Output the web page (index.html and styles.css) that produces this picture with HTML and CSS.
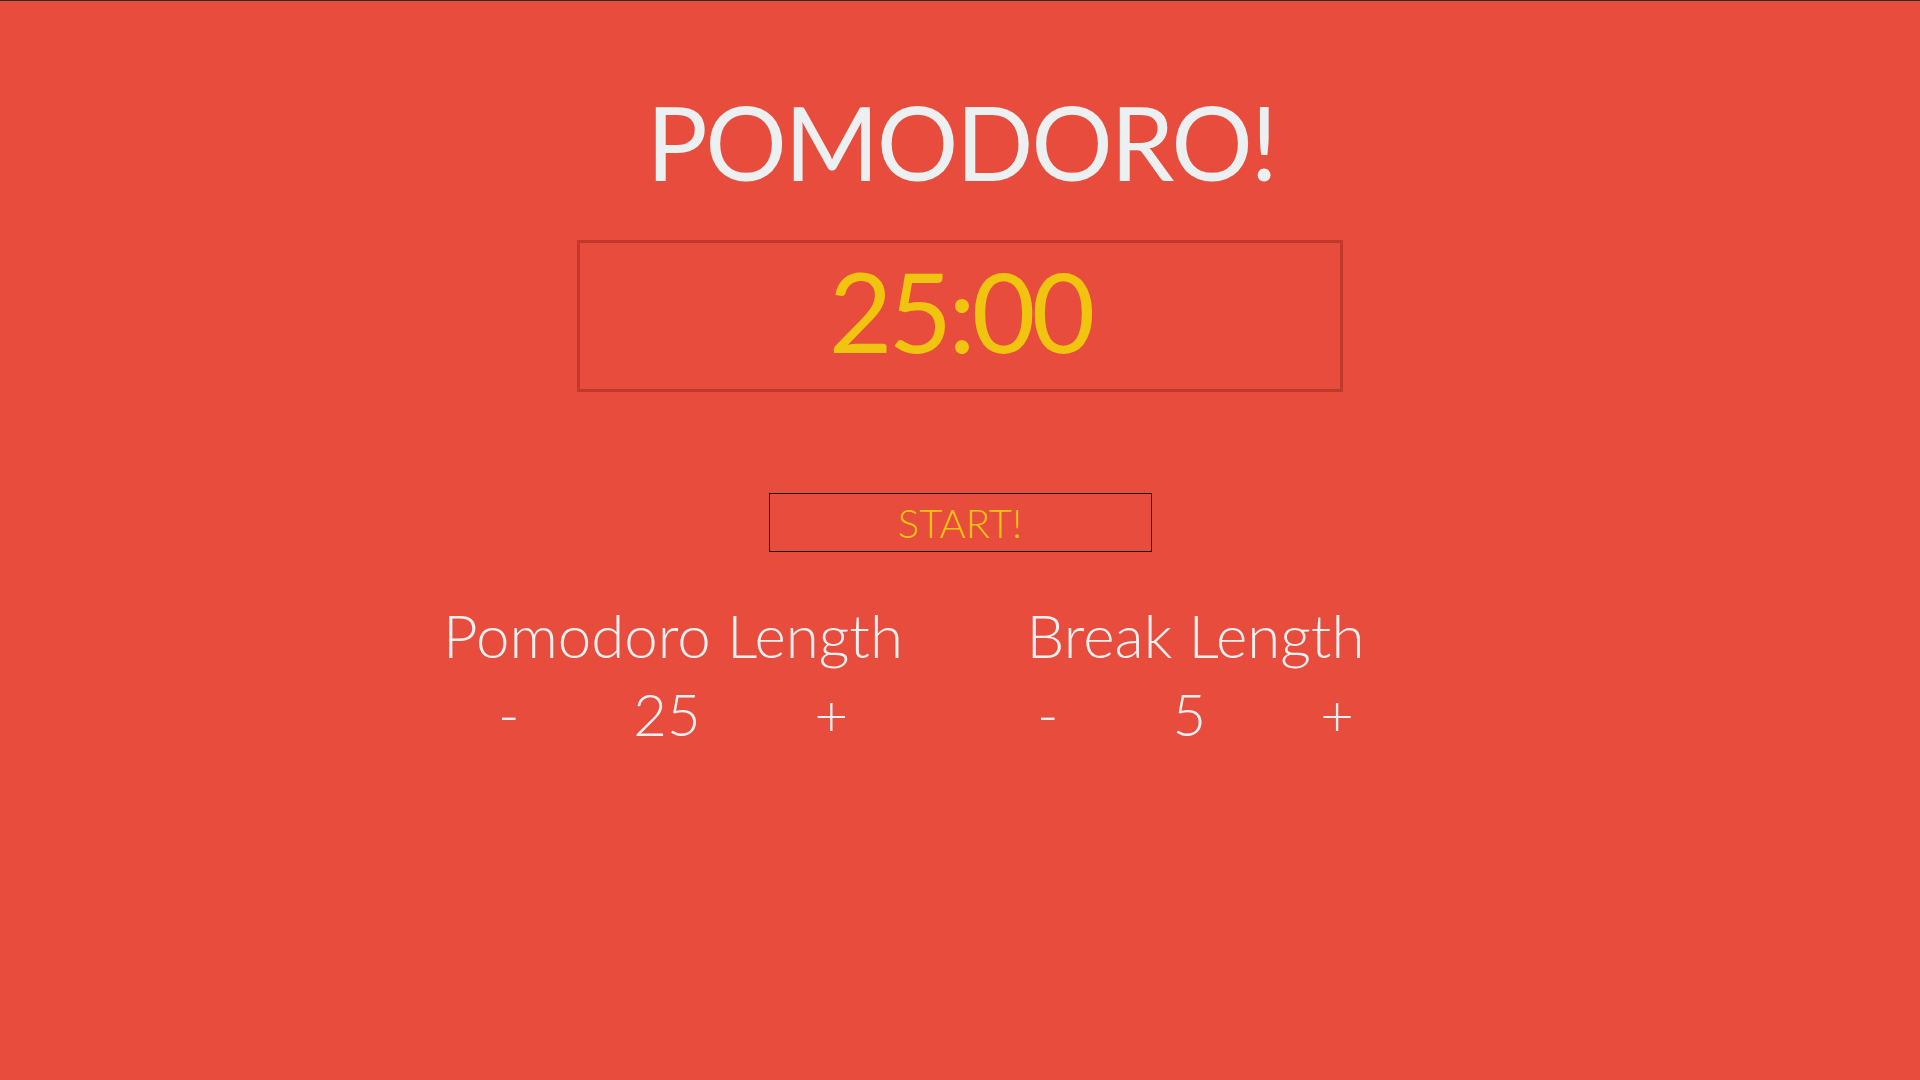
FILE: index.html
```html
<!DOCTYPE html>
<html lang="en">
<head>
<meta charset="utf-8">
<title>Pomodoro</title>
<link rel="stylesheet" href="styles.css">
</head>
<body>
  <main class="app">
    <h1 class="title">POMODORO!</h1>
    <div class="timer">25:00</div>
    <button class="start">START!</button>
    <section class="settings">
      <div class="setting setting-pomodoro">
        <h2 class="label">Pomodoro Length</h2>
        <div class="controls">
          <span class="ctl minus">-</span>
          <span class="ctl value">25</span>
          <span class="ctl plus">+</span>
        </div>
      </div>
      <div class="setting setting-break">
        <h2 class="label">Break Length</h2>
        <div class="controls">
          <span class="ctl minus">-</span>
          <span class="ctl value">5</span>
          <span class="ctl plus">+</span>
        </div>
      </div>
    </section>
  </main>
</body>
</html>
```

FILE: styles.css
```css
html, body {
  margin: 0;
  padding: 0;
}

body {
  background: #e74c3c;
  border-top: 1px solid #2a2a2a;
  min-height: 1079px;
  font-family: Lato, "Open Sans", sans-serif;
  color: #ecf0f1;
}

.app {
  display: flex;
  flex-direction: column;
  align-items: center;
}

.title {
  margin: 90px 0 0;
  padding-left: 2px;
  font-size: 102px;
  line-height: 1;
  font-weight: 400;
  letter-spacing: -2.4px;
  color: #ecf0f1;
}

.timer {
  box-sizing: border-box;
  margin-top: 47px;
  width: 766px;
  height: 152px;
  padding: 12px 0 24px;
  border: 3px solid #c0392b;
  text-align: center;
  font-size: 110px;
  line-height: 1;
  font-weight: 400;
  letter-spacing: -4px;
  color: #f1c40f;
}

.start {
  box-sizing: border-box;
  margin-top: 101px;
  width: 383px;
  height: 59px;
  padding: 9px 0 0;
  border: 1px solid #111;
  background: transparent;
  font-family: Lato, "Open Sans", sans-serif;
  font-size: 40px;
  line-height: 1;
  font-weight: 300;
  color: #f1c40f;
  display: flex;
  justify-content: center;
  align-items: flex-start;
}

.settings {
  align-self: stretch;
  display: flex;
  justify-content: center;
  gap: 75px;
  padding-right: 68px;
  margin-top: 53px;
}

.setting {
  display: flex;
  flex-direction: column;
}

.setting-pomodoro { width: 464px; }
.setting-break { width: 431px; }

.label {
  margin: 0;
  text-align: center;
  font-size: 60px;
  line-height: 1;
  font-weight: 300;
  white-space: nowrap;
}

.controls {
  margin-top: 20px;
  display: flex;
  justify-content: space-around;
  font-size: 58px;
  line-height: 1;
  font-weight: 300;
}
```
